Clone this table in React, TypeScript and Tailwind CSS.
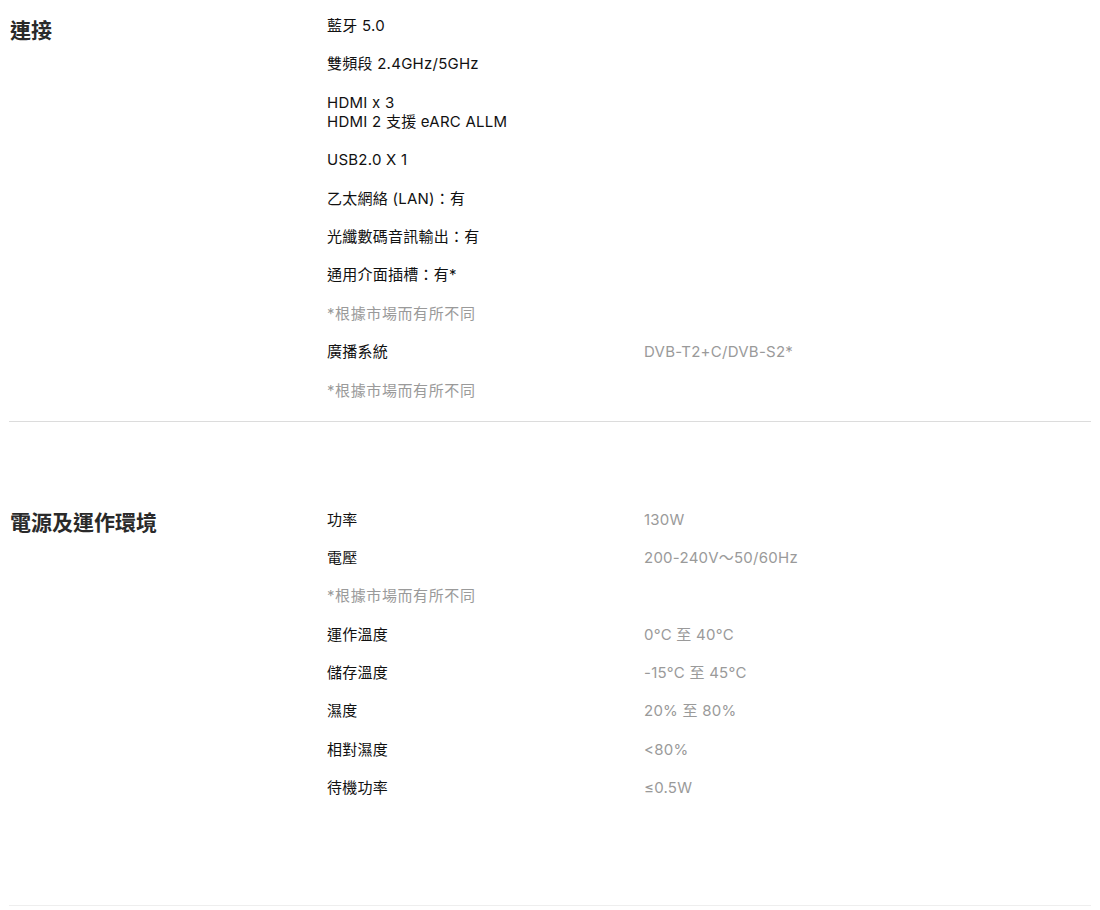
import React from "react";

const font = { fontFamily: '"Inter", "Noto Sans CJK TC", sans-serif' };

type Row = { label: React.ReactNode; value?: string; note?: boolean };

function Rows({ rows }: { rows: Row[] }) {
  return (
    <div className="flex flex-col gap-[19.4px]">
      {rows.map((r, i) => (
        <div key={i} className="flex text-[15px] leading-[19px] tracking-[0.25px]">
          <div
            className={
              "w-[317px] shrink-0 " +
              (r.note ? "text-[#9a9a9a] tracking-[0.6px]" : "text-[#111111]")
            }
          >
            {r.label}
          </div>
          {r.value && <div className="text-[#9a9a9a]">{r.value}</div>}
        </div>
      ))}
    </div>
  );
}

export default function App() {
  const sec1: Row[] = [
    { label: "藍牙 5.0" },
    { label: "雙頻段 2.4GHz/5GHz" },
    {
      label: (
        <>
          HDMI x 3
          <br />
          HDMI 2 支援 eARC ALLM
        </>
      ),
    },
    { label: "USB2.0 X 1" },
    { label: "乙太網絡 (LAN)：有" },
    { label: "光纖數碼音訊輸出：有" },
    { label: "通用介面插槽：有*" },
    { label: "*根據市場而有所不同", note: true },
    { label: "廣播系統", value: "DVB-T2+C/DVB-S2*" },
    { label: "*根據市場而有所不同", note: true },
  ];
  const sec2: Row[] = [
    { label: "功率", value: "130W" },
    { label: "電壓", value: "200-240V～50/60Hz" },
    { label: "*根據市場而有所不同", note: true },
    { label: "運作溫度", value: "0°C 至 40°C" },
    { label: "儲存溫度", value: "-15°C 至 45°C" },
    { label: "濕度", value: "20% 至 80%" },
    { label: "相對濕度", value: "<80%" },
    { label: "待機功率", value: "≤0.5W" },
  ];
  return (
    <div className="w-[1100px] bg-white px-[9px]" style={font}>
      <div className="flex pt-[16px] pb-[21px] border-b border-[#dcdcdc]">
        <div className="w-[318px] shrink-0 pl-[1px] pt-[2px] text-[21px] leading-[26px] font-bold text-[#2a2a2a]">
          連接
        </div>
        <Rows rows={sec1} />
      </div>
      <div className="flex pt-[88px] pb-[108px] border-b border-[#eeeeee]">
        <div className="w-[318px] shrink-0 pl-[1px] pt-[0px] text-[21px] leading-[26px] font-bold text-[#2a2a2a]">
          電源及運作環境
        </div>
        <Rows rows={sec2} />
      </div>
    </div>
  );
}
